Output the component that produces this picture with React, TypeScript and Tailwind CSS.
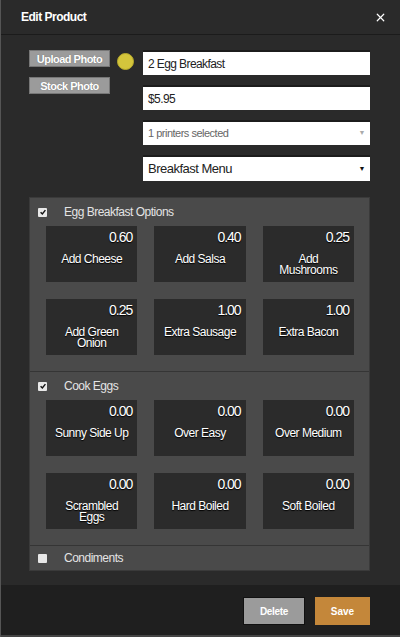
import { X } from 'lucide-react'

type Option = { name: string; price: string }

const EGG_OPTIONS: Option[] = [
  { name: 'Add Cheese', price: '0.60' },
  { name: 'Add Salsa', price: '0.40' },
  { name: 'Add Mushrooms', price: '0.25' },
  { name: 'Add Green Onion', price: '0.25' },
  { name: 'Extra Sausage', price: '1.00' },
  { name: 'Extra Bacon', price: '1.00' },
]

const COOK_OPTIONS: Option[] = [
  { name: 'Sunny Side Up', price: '0.00' },
  { name: 'Over Easy', price: '0.00' },
  { name: 'Over Medium', price: '0.00' },
  { name: 'Scrambled Eggs', price: '0.00' },
  { name: 'Hard Boiled', price: '0.00' },
  { name: 'Soft Boiled', price: '0.00' },
]

function Check({ checked }: { checked: boolean }) {
  return (
    <span className="w-[9px] h-[9px] bg-[#e8e8e8] rounded-[1px] flex items-center justify-center">
      {checked && (
        <svg viewBox="0 0 10 10" className="w-[8px] h-[8px]">
          <path d="M2 5.2 L4.2 7.4 L8 2.6" fill="none" stroke="#111" strokeWidth="1.8" />
        </svg>
      )}
    </span>
  )
}

function GroupHeader({ label, checked, tall }: { label: string; checked: boolean; tall: boolean }) {
  return (
    <div className={`${tall ? 'h-[28px]' : 'h-[24px]'} flex items-center pl-[8px] gap-[17px]`}>
      <Check checked={checked} />
      <span className="text-[12px] tracking-[-0.5px] text-[#e4e4e4]">{label}</span>
    </div>
  )
}

function Tile({ option }: { option: Option }) {
  return (
    <div className="h-[56px] bg-[#2b2b2b] flex flex-col pt-[3px] px-[5px] text-white [text-shadow:0_1px_1px_#000]">
      <div className="text-right text-[14px] tracking-[-1px] leading-[16px]">{option.price}</div>
      <div className="mt-[9px] mx-auto max-w-[78px] text-center text-[12px] tracking-[-0.5px] leading-[11px]">
        {option.name}
      </div>
    </div>
  )
}

function Group({ label, checked, options }: { label: string; checked: boolean; options?: Option[] }) {
  return (
    <div className="border-b border-[#353535] last:border-b-0">
      <GroupHeader label={label} checked={checked} tall={!!options} />
      {options && (
        <div className="grid grid-cols-3 gap-x-[17px] gap-y-[17px] pl-[16px] pr-[15px] pb-[16px]">
          {options.map((o) => (
            <Tile key={o.name} option={o} />
          ))}
        </div>
      )}
    </div>
  )
}

export default function App() {
  return (
    <div className="w-[400px] h-[637px] bg-[#2a2a2a] flex flex-col border-l border-[#555] font-['Liberation_Sans',Arial,sans-serif]">
      {/* Header */}
      <div className="h-[35px] flex items-center justify-between pl-[20px] pr-[13px] border-b border-[#1b1b1b]">
        <h1 className="text-[12px] tracking-[-0.5px] font-bold text-white">Edit Product</h1>
        <X size={13} strokeWidth={2.25} className="text-white" />
      </div>

      {/* Body */}
      <div className="flex-1 pt-[15px] pl-[28px] pr-[30px]">
        <div className="flex">
          <div className="flex flex-col gap-[10px] w-[81px]">
            <button className="h-[17px] bg-[#9b9b9b] text-white text-[11px] tracking-[-0.5px] font-bold border border-[#777] [text-shadow:0_0_1px_#666]">
              Upload Photo
            </button>
            <button className="h-[17px] bg-[#9b9b9b] text-white text-[11px] tracking-[-0.5px] font-bold border border-[#777] [text-shadow:0_0_1px_#666]">
              Stock Photo
            </button>
          </div>
          <div className="ml-[7px] mt-[3px] w-[17px] h-[17px] rounded-full bg-[#d4c53c] border border-[#b8ab2c]" />
          <div className="ml-[9px] flex-1 flex flex-col gap-[10px]">
            <div className="h-[25px] bg-white border-t-2 border-[#1c1c1c] flex items-center px-[5px] text-[12px] tracking-[-0.6px] text-[#222]">
              2 Egg Breakfast
            </div>
            <div className="h-[25px] bg-white border-t-2 border-[#1c1c1c] flex items-center px-[5px] text-[12px] tracking-[-0.6px] text-[#222]">
              $5.95
            </div>
            <div className="h-[25px] bg-white border-t-2 border-[#1c1c1c] flex items-center justify-between px-[5px] text-[11px] tracking-[-0.5px] text-[#666]">
              <span>1 printers selected</span>
              <span className="text-[7px] text-[#aaa]">▼</span>
            </div>
            <div className="h-[26px] bg-white border-t-2 border-[#1c1c1c] flex items-center justify-between px-[5px] text-[13px] tracking-[-0.5px] text-[#222]">
              <span>Breakfast Menu</span>
              <span className="text-[7px] text-[#111]">▼</span>
            </div>
          </div>
        </div>

        {/* Modifier groups */}
        <div className="mt-[16px] bg-[#4a4a4a] border border-[#3a3a3a]">
          <Group label="Egg Breakfast Options" checked options={EGG_OPTIONS} />
          <Group label="Cook Eggs" checked options={COOK_OPTIONS} />
          <Group label="Condiments" checked={false} />
        </div>
      </div>

      {/* Footer */}
      <div className="h-[52px] bg-[#1f1f1f] flex items-start justify-end gap-[10px] pt-[12px] pr-[30px] border-b-2 border-[#444]">
        <button className="w-[62px] h-[28px] bg-[#9b9b9b] border border-[#111] text-white text-[10px] tracking-[-0.3px] font-bold">
          Delete
        </button>
        <button className="w-[55px] h-[28px] bg-[#c4873a] text-white text-[10px] font-bold">Save</button>
      </div>
    </div>
  )
}
